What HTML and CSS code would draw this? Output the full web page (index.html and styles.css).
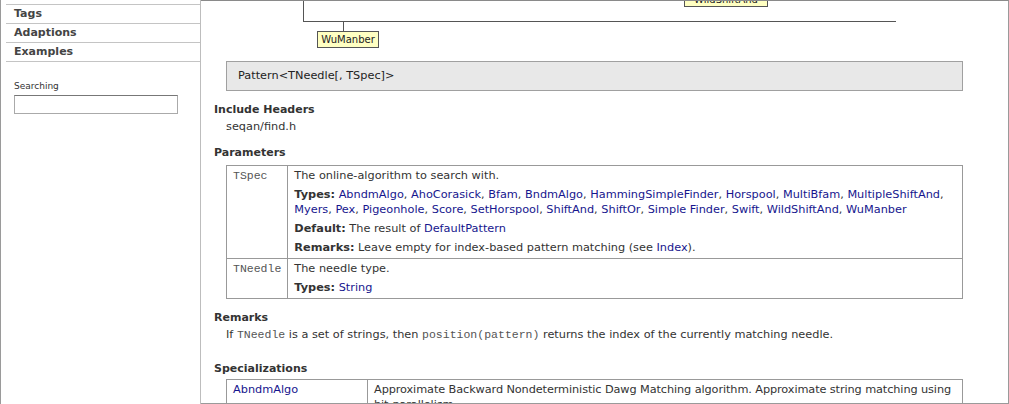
FILE: index.html
```html
<!DOCTYPE html>
<html>
<head>
<meta charset="utf-8">
<title>Pattern</title>
<link rel="stylesheet" href="styles.css">
</head>
<body>
<div class="frame">
  <aside class="sidebar">
    <ul class="nav">
      <li>Tags</li>
      <li>Adaptions</li>
      <li>Examples</li>
    </ul>
    <div class="search">
      <label class="search-label" for="q">Searching</label>
      <input class="search-input" id="q" type="text">
    </div>
  </aside>
  <main class="main">
    <div class="diagram">
      <div class="node node-top"><span>WildShiftAnd</span></div>
      <div class="line vline"></div>
      <div class="line hline"></div>
      <div class="line tick"></div>
      <div class="node node-wu">WuManber</div>
    </div>
    <div class="sig">Pattern&lt;TNeedle[, TSpec]&gt;</div>

    <h3 class="h">Include Headers</h3>
    <div class="body">seqan/find.h</div>

    <h3 class="h">Parameters</h3>
    <table class="tbl params">
      <tr>
        <td class="c1"><code>TSpec</code></td>
        <td class="c2">
          <p>The online-algorithm to search with.</p>
          <p><b>Types:</b> <a>AbndmAlgo</a>, <a>AhoCorasick</a>, <a>Bfam</a>, <a>BndmAlgo</a>, <a>HammingSimpleFinder</a>, <a>Horspool</a>, <a>MultiBfam</a>, <a>MultipleShiftAnd</a>, <a>Myers</a>, <a>Pex</a>, <a>Pigeonhole</a>, <a>Score</a>, <a>SetHorspool</a>, <a>ShiftAnd</a>, <a>ShiftOr</a>, <a>Simple Finder</a>, <a>Swift</a>, <a>WildShiftAnd</a>, <a>WuManber</a></p>
          <p><b>Default:</b> The result of <a>DefaultPattern</a></p>
          <p><b>Remarks:</b> Leave empty for index-based pattern matching (see <a>Index</a>).</p>
        </td>
      </tr>
      <tr>
        <td class="c1"><code>TNeedle</code></td>
        <td class="c2">
          <p>The needle type.</p>
          <p><b>Types:</b> <a>String</a></p>
        </td>
      </tr>
    </table>

    <h3 class="h">Remarks</h3>
    <div class="body remark">If <code>TNeedle</code> is a set of strings, then <code>position(pattern)</code> returns the index of the currently matching needle.</div>

    <h3 class="h">Specializations</h3>
    <table class="tbl specs">
      <tr>
        <td class="s1"><a>AbndmAlgo</a></td>
        <td class="s2"><p>Approximate Backward Nondeterministic Dawg Matching algorithm. Approximate string matching using bit-parallelism.</p></td>
      </tr>
    </table>
  </main>
</div>
</body>
</html>
```
FILE: styles.css
```css
html, body {
  margin: 0;
  padding: 0;
  background: #fff;
}

body {
  font-family: "DejaVu Sans", Verdana, sans-serif;
  font-size: 11.3px;
  color: #333;
}

.frame {
  display: flex;
  width: 1009px;
  height: 404px;
  box-sizing: border-box;
  border-left: 1px solid #9a9a9a;
  overflow: hidden;
}

/* ---------- sidebar ---------- */
.sidebar {
  width: 200px;
  flex: none;
  box-sizing: border-box;
  border-right: 1px solid #bdbdbd;
}

.nav {
  list-style: none;
  margin: 4px 0 0 5px;
  padding: 0;
}

.nav li {
  border-top: 1px solid #c4c4c4;
  height: 18px;
  line-height: 18px;
  padding-left: 8px;
  font-weight: bold;
  font-size: 11px;
  color: #444;
}

.nav li:last-child {
  border-bottom: 1px solid #c4c4c4;
}

.search {
  display: flex;
  flex-direction: column;
  padding: 18px 0 0 13px;
}

.search-label {
  font-size: 9px;
  line-height: 12px;
  color: #333;
  margin-bottom: 3px;
}

.search-input {
  width: 164px;
  height: 19px;
  box-sizing: border-box;
  margin: 0;
  padding: 0;
  border: 1px solid #aaa;
  border-top-color: #777;
  background: #fff;
}

/* ---------- main ---------- */
.main {
  flex: 1;
  min-width: 0;
  border-top: 1px solid #8a8a8a;
  border-right: 1px solid #9a9a9a;
  border-bottom: 1px solid #9a9a9a;
  padding: 0 45px 0 13px;
  overflow: hidden;
}

.diagram {
  position: relative;
  height: 60px;
}

.line {
  position: absolute;
  background: #555;
}

.vline { left: 89px; top: 0; width: 1px; height: 21px; }
.hline { left: 89px; top: 20px; width: 593px; height: 1px; }
.tick  { left: 129px; top: 21px; width: 1px; height: 9px; }

.node {
  position: absolute;
  box-sizing: border-box;
  background: #ffffc2;
  border: 1px solid #555;
  color: #222;
  font-size: 10px;
  text-align: center;
  overflow: hidden;
}

.node-wu {
  left: 103px;
  top: 30px;
  width: 62px;
  height: 17px;
  line-height: 15px;
}

.node-top {
  left: 470px;
  top: -12px;
  width: 84px;
  height: 18px;
  line-height: 19px;
}

.sig {
  margin-left: 12px;
  height: 30px;
  box-sizing: border-box;
  border: 1px solid #a0a0a0;
  background: #e8e8e8;
  padding-left: 11px;
  line-height: 28px;
  font-size: 11.3px;
  color: #222;
}

.h {
  margin: 11px 0 0;
  font-size: 11px;
  line-height: 15px;
  font-weight: bold;
  color: #333;
}

.body {
  margin: 2px 0 0 12px;
  line-height: 15px;
}

.remark {
  margin-bottom: 19px;
}

code {
  font-family: "Liberation Mono", "Courier New", monospace;
  font-size: 11.5px;
  color: #555;
}

a {
  color: #16168e;
  text-decoration: none;
}

b {
  color: #333;
}

.tbl {
  margin: 5px 0 0 12px;
  width: calc(100% - 12px);
  border-collapse: collapse;
  border: 1px solid #999;
}

.tbl td {
  border: 1px solid #999;
  vertical-align: top;
  padding: 2px 6px 3px;
  line-height: 15px;
}

.tbl p {
  margin: 0;
}

.tbl p + p {
  margin-top: 4px;
}

.c1 { width: 48px; }
.s1 { width: 128px; }
.tbl td.s2 {
  padding-right: 1px;
  letter-spacing: -0.1px;
}

.specs {
  margin-top: 3px;
}
```
